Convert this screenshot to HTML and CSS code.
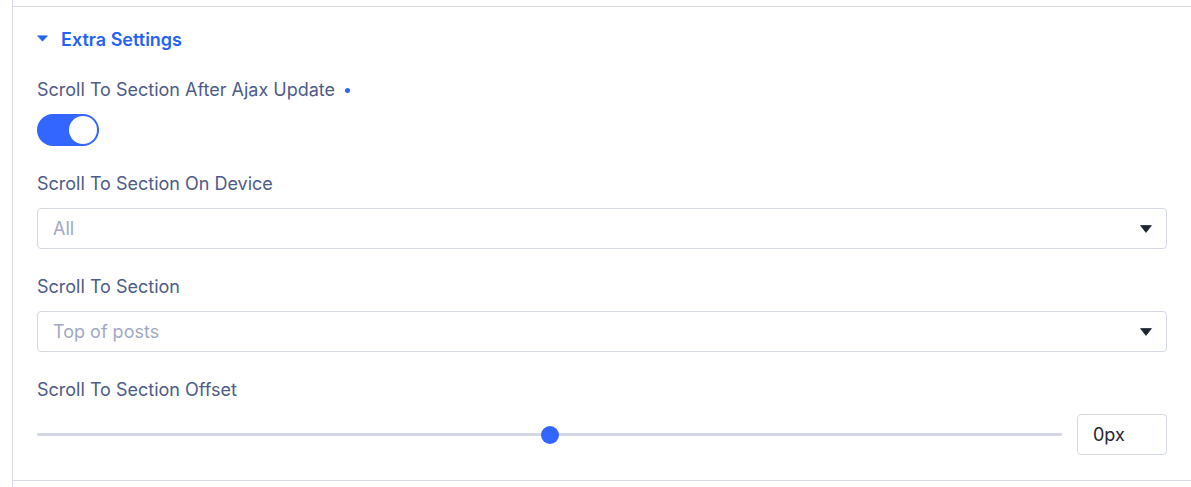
FILE: index.html
```html
<!DOCTYPE html>
<html lang="en">
<head>
<meta charset="utf-8">
<title>Extra Settings</title>
<link rel="stylesheet" href="styles.css">
</head>
<body>
<div class="frame">
  <section class="panel">
    <div class="panel-head">
      <svg class="caret" width="11" height="7" viewBox="0 0 11 7"><path d="M0.5 0.8 H10.5 L5.5 6.2 Z" fill="currentColor" stroke="currentColor" stroke-width="0.6" stroke-linejoin="round"/></svg>
      <span class="panel-title">Extra Settings</span>
    </div>

    <div class="field field-toggle">
      <div class="label">Scroll To Section After Ajax Update <span class="dot"></span></div>
      <div class="toggle"><span class="knob"></span></div>
    </div>

    <div class="field">
      <div class="label">Scroll To Section On Device</div>
      <div class="select">
        <span class="select-value">All</span>
        <svg class="arrow" width="12" height="8" viewBox="0 0 12 8"><path d="M0.6 0.6 H11.4 L6 7.4 Z" fill="currentColor" stroke="currentColor" stroke-width="0.8" stroke-linejoin="round"/></svg>
      </div>
    </div>

    <div class="field">
      <div class="label">Scroll To Section</div>
      <div class="select">
        <span class="select-value">Top of posts</span>
        <svg class="arrow" width="12" height="8" viewBox="0 0 12 8"><path d="M0.6 0.6 H11.4 L6 7.4 Z" fill="currentColor" stroke="currentColor" stroke-width="0.8" stroke-linejoin="round"/></svg>
      </div>
    </div>

    <div class="field field-last">
      <div class="label">Scroll To Section Offset</div>
      <div class="slider-row">
        <div class="slider">
          <div class="track"></div>
          <span class="thumb" style="left: 50%"></span>
        </div>
        <div class="num-input">0px</div>
      </div>
    </div>
  </section>
</div>
</body>
</html>
```

FILE: styles.css
```css
* { box-sizing: border-box; }

html, body {
  margin: 0;
  padding: 0;
  background: #ffffff;
  font-family: Inter, "Noto Sans", sans-serif;
}

.frame {
  margin-left: 12px;
  min-height: 487px;
  border-left: 1px solid #d5d9e7;
  padding-top: 6px;
}

.panel {
  border-top: 1px solid #d5d9e7;
  border-bottom: 1px solid #d5d9e7;
  padding: 21px 24px 25px 24px;
}

.panel-head {
  display: flex;
  align-items: center;
  height: 24px;
  margin-bottom: 26px;
  color: #2563f5;
}

.caret {
  display: block;
  margin-right: 13px;
  margin-top: -3px;
  color: #2563f5;
}

.panel-title {
  font-size: 18px;
  font-weight: 600;
  line-height: 24px;
  color: #2563f5;
}

.field {
  margin-bottom: 26px;
}

.field-last {
  margin-bottom: 0;
}

.label {
  font-size: 18px;
  line-height: 24px;
  color: #4d5c88;
  margin-bottom: 12px;
  display: flex;
  align-items: center;
}

.dot {
  display: inline-block;
  width: 5px;
  height: 5px;
  border-radius: 50%;
  background: #2f66f6;
  margin-left: 10px;
  margin-top: 1px;
}

.toggle {
  width: 62px;
  height: 32px;
  border-radius: 16px;
  background: #3366ff;
  display: flex;
  align-items: center;
  justify-content: flex-end;
  padding-right: 2px;
}

.knob {
  width: 28px;
  height: 28px;
  border-radius: 50%;
  background: #ffffff;
}

.select {
  height: 41px;
  border: 1px solid #d5d9e5;
  border-radius: 4px;
  display: flex;
  align-items: center;
  justify-content: space-between;
  padding: 0 14px 0 15px;
}

.select-value {
  font-size: 18px;
  color: #9fa9c4;
}

.arrow {
  display: block;
  color: #1f2533;
}

.slider-row {
  display: flex;
  align-items: center;
  gap: 15px;
}

.slider {
  flex: 1;
  position: relative;
  height: 18px;
  display: flex;
  align-items: center;
}

.track {
  width: 100%;
  height: 3px;
  border-radius: 2px;
  background: #d3d7e3;
}

.thumb {
  position: absolute;
  top: 0;
  width: 18px;
  height: 18px;
  margin-left: -9px;
  border-radius: 50%;
  background: #3366ff;
}

.num-input {
  width: 90px;
  height: 41px;
  border: 1px solid #d5d9e5;
  border-radius: 4px;
  display: flex;
  align-items: center;
  padding-left: 15px;
  font-size: 18px;
  color: #1f2533;
}
```
